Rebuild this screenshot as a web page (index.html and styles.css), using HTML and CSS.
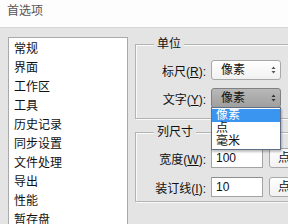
FILE: index.html
```html
<!DOCTYPE html>
<html lang="zh-CN">
<head>
<meta charset="utf-8">
<title>首选项</title>
<link rel="stylesheet" href="styles.css">
</head>
<body>
<div class="window">
  <div class="titlebar">首选项</div>
  <div class="main">
    <ul class="nav">
      <li>常规</li>
      <li>界面</li>
      <li>工作区</li>
      <li>工具</li>
      <li>历史记录</li>
      <li>同步设置</li>
      <li>文件处理</li>
      <li>导出</li>
      <li>性能</li>
      <li>暂存盘</li>
    </ul>
    <div class="panel">
      <fieldset class="group group-units">
        <legend>单位</legend>
        <div class="rows">
          <div class="row">
            <label class="lbl">标尺(<u>R</u>):</label>
            <div class="select"><span>像素</span><svg class="arrows" width="5" height="8" viewBox="0 0 5 8"><path d="M2.5 0.5 L4.5 3 L0.5 3 Z M2.5 7.5 L4.5 5 L0.5 5 Z" fill="#555"/></svg></div>
          </div>
          <div class="row">
            <label class="lbl">文字(<u>Y</u>):</label>
            <div class="select focused"><span>像素</span><svg class="arrows" width="5" height="8" viewBox="0 0 5 8"><path d="M2.5 0.5 L4.5 3 L0.5 3 Z M2.5 7.5 L4.5 5 L0.5 5 Z" fill="#333"/></svg>
              <ul class="dropdown">
                <li class="active">像素</li>
                <li>点</li>
                <li>毫米</li>
              </ul>
            </div>
          </div>
        </div>
      </fieldset>
      <fieldset class="group group-cols">
        <legend>列尺寸</legend>
        <div class="rows rows-cols">
          <div class="row">
            <label class="lbl">宽度(<u>W</u>):</label>
            <div class="input">100</div>
            <div class="select unit"><span>点</span></div>
          </div>
          <div class="row">
            <label class="lbl">装订线(<u>I</u>):</label>
            <div class="input">10</div>
            <div class="select unit"><span>点</span></div>
          </div>
        </div>
      </fieldset>
    </div>
  </div>
</div>
</body>
</html>
```
FILE: styles.css
```css
html, body {
  margin: 0;
  padding: 0;
}
body {
  width: 288px;
  height: 224px;
  overflow: hidden;
  background: #e4e4e4;
  font-family: "Liberation Sans", "Noto Sans CJK SC", sans-serif;
  font-size: 12px;
  color: #111;
}
.window {
  width: 288px;
  height: 224px;
  overflow: hidden;
}
.titlebar {
  box-sizing: border-box;
  height: 28px;
  background: #fdfdfd;
  border-bottom: 1px solid #d6d6d6;
  padding-left: 7px;
  line-height: 22px;
  color: #555;
}
.main {
  display: flex;
  align-items: flex-start;
  padding: 9px 0 0 8px;
}
.nav {
  box-sizing: border-box;
  flex: none;
  width: 120px;
  height: 200px;
  margin: 0;
  padding: 2px 0 0 5px;
  list-style: none;
  background: #fff;
  border: 1px solid #a9a9a9;
}
.nav li {
  line-height: 19px;
  height: 19px;
}
.panel {
  flex: none;
  width: 190px;
  margin-left: 7px;
  display: flex;
  flex-direction: column;
}
.group {
  margin: 0;
  padding: 0;
  border: 1px solid #b3b3b3;
  box-shadow: inset 1px 1px 0 #fafafa, 1px 1px 0 #fafafa;
  min-width: 0;
}
.group legend {
  margin-left: 18px;
  padding: 0 3px;
  line-height: 14px;
  background: #e4e4e4;
}
.group-cols {
  margin-top: 6px;
}
.rows {
  display: flex;
  flex-direction: column;
  gap: 8px;
  margin-top: 9px;
  padding-bottom: 10px;
}
.rows-cols {
  gap: 9px;
  padding-bottom: 4px;
}
.row {
  display: flex;
  align-items: center;
  gap: 5px;
  height: 20px;
}
.lbl {
  width: 70px;
  flex: none;
  text-align: right;
  white-space: nowrap;
}
.select {
  position: relative;
  box-sizing: border-box;
  flex: none;
  width: 70px;
  height: 20px;
  border: 1px solid #a8a8a8;
  border-radius: 3px;
  background: linear-gradient(#ffffff, #f1f1f1);
  display: flex;
  align-items: center;
  justify-content: space-between;
  padding: 0 4px 0 9px;
}
.select span {
  line-height: 18px;
}
.arrows {
  display: block;
}
.select.focused {
  background: linear-gradient(#b8b8b8, #9f9f9f);
  border-color: #808080;
}
.select.unit {
  width: 50px;
  margin-left: 1px;
  padding-left: 8px;
}
.input {
  box-sizing: border-box;
  flex: none;
  width: 52px;
  height: 20px;
  background: #fff;
  border: 1px solid #a3a3a3;
  border-top-color: #8e8e8e;
  padding-left: 4px;
  line-height: 18px;
}
.dropdown {
  position: absolute;
  left: -1px;
  top: 18px;
  box-sizing: border-box;
  width: 70px;
  margin: 0;
  padding: 1px 0;
  list-style: none;
  background: #fff;
  border: 1px solid #5f6f85;
  box-shadow: 1px 2px 2px rgba(0, 0, 0, 0.25);
  z-index: 2;
}
.dropdown li {
  height: 13px;
  line-height: 13px;
  padding-left: 4px;
  color: #111;
}
.dropdown li.active {
  background: #3a95f0;
  color: #fff;
}
```
